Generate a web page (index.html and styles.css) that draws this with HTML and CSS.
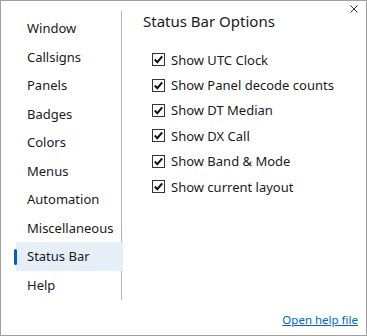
FILE: index.html
```html
<!DOCTYPE html>
<html>
<head>
    <title>Settings</title>
    <meta charset="UTF-8">
    <link rel="stylesheet" href="styles.css">
</head>
<body>

<div class="window">
    <svg class="close" width="8" height="8" viewBox="0 0 8 8"><path d="M0.5 0.5 L7.5 7.5 M7.5 0.5 L0.5 7.5" stroke="#333" stroke-width="1"/></svg>
    <div class="main">
        <ul class="nav">
            <li>Window</li>
            <li>Callsigns</li>
            <li>Panels</li>
            <li>Badges</li>
            <li>Colors</li>
            <li>Menus</li>
            <li>Automation</li>
            <li>Miscellaneous</li>
            <li class="selected">Status Bar</li>
            <li>Help</li>
        </ul>
        <div class="page">
            <h2>Status Bar Options</h2>
            <label class="check"><span class="box"></span>Show UTC Clock</label>
            <label class="check"><span class="box"></span>Show Panel decode counts</label>
            <label class="check"><span class="box"></span>Show DT Median</label>
            <label class="check"><span class="box"></span>Show DX Call</label>
            <label class="check"><span class="box"></span>Show Band &amp; Mode</label>
            <label class="check"><span class="box"></span>Show current layout</label>
        </div>
    </div>
    <div class="footer">
        <a href="#">Open help file</a>
    </div>
</div>

</body>
</html>
```

FILE: styles.css
```css
body {
    margin: 0;
    font-family: "Noto Sans", sans-serif;
    font-size: 13px;
    color: #1a1a1a;
}

.window {
    position: relative;
    box-sizing: border-box;
    width: 367px;
    height: 336px;
    border: 1px solid #a0a0a0;
    background: #fff;
    display: flex;
    flex-direction: column;
}

.close {
    position: absolute;
    top: 4px;
    right: 8px;
}

.main {
    display: flex;
    flex: 1;
}

.nav {
    list-style: none;
    margin: 10px 0 0 15px;
    padding: 3px 0 0 0;
    width: 105px;
    height: 286px;
    border-right: 1px solid #b4b4b4;
}
.nav li {
    position: relative;
    height: 28.55px;
    line-height: 28px;
    padding-left: 11px;
}
.nav li.selected {
    background: #e6eef8;
    margin-right: -2px;
}
.nav li.selected::before {
    content: "";
    position: absolute;
    left: -2px;
    top: 7px;
    width: 3px;
    height: 16px;
    border-radius: 2px;
    background: #0060c0;
}

.page {
    padding: 10px 0 0 21px;
}
.page h2 {
    font-weight: normal;
    font-size: 15px;
    margin: 0 0 16px 0;
}

.check {
    display: flex;
    align-items: center;
    height: 25.4px;
    margin-left: 9px;
}
.box {
    box-sizing: border-box;
    width: 13px;
    height: 13px;
    border: 1px solid #333;
    margin-right: 6px;
    background: #fff url("data:image/svg+xml,%3Csvg xmlns='http://www.w3.org/2000/svg' width='11' height='11'%3E%3Cpath d='M1.8 5.5 L4.3 8.2 L9.2 2.3' fill='none' stroke='%23111' stroke-width='2'/%3E%3C/svg%3E") no-repeat center;
}

.footer {
    text-align: right;
    padding: 0 8px 7px 0;
}
.footer a {
    font-size: 11.5px;
    color: #0066cc;
}
```
